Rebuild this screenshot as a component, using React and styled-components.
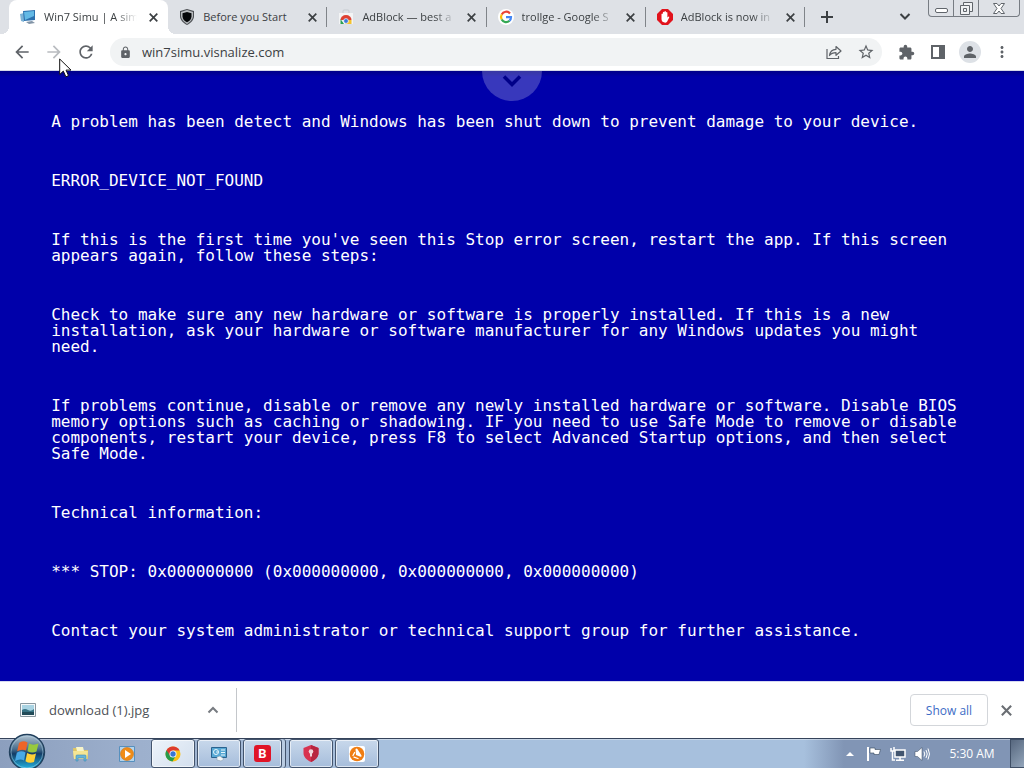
import React from "react";
import styled, { createGlobalStyle } from "styled-components";
import {
  MdArrowBack, MdArrowForward, MdRefresh, MdLock, MdStarBorder,
  MdExtension, MdPerson, MdMoreVert,
} from "react-icons/md";

const Global = createGlobalStyle`
  *, *::before, *::after { box-sizing: border-box; }
  body { margin: 0; font-family: "Open Sans", "Noto Sans", sans-serif; font-size: 12px; color: #3c4043; }
  button { font: inherit; color: inherit; border: 0; background: none; padding: 0; }
  a { color: inherit; text-decoration: none; }
  svg { display: block; flex: none; }
`;

const Desktop = styled.div`
  display: flex;
  flex-direction: column;
  min-height: 100vh;
  background: #fff;
`;

/* ---------- tab strip ---------- */
const TabStrip = styled.header`
  display: flex;
  height: 34px;
  padding-left: 9px;
  background: #dee1e6;
`;
const Tabs = styled.nav`
  display: flex;
  flex: 0 1 796px;
  min-width: 0;
`;
const Tab = styled.div`
  position: relative;
  flex: 1 1 0;
  min-width: 0;
  display: flex;
  align-items: center;
  gap: 8px;
  padding: 0 7px 0 11px;
  border-radius: 8px 8px 0 0;
  background: ${(p) => (p.$active ? "#fff" : "transparent")};
  &::before, &::after {
    content: "";
    display: ${(p) => (p.$active ? "block" : "none")};
    position: absolute;
    bottom: 0;
    width: 8px;
    height: 8px;
  }
  &::before { right: 100%; background: radial-gradient(circle at 0 0, transparent 8px, #fff 8px); }
  &::after { left: 100%; background: radial-gradient(circle at 100% 0, transparent 8px, #fff 8px); }
`;
const Divider = styled.span`
  align-self: center;
  flex: none;
  width: 1px;
  height: 20px;
  margin-left: -1px;
  background: #808489;
`;
const TabLink = styled.a`
  flex: 1;
  min-width: 0;
  overflow: hidden;
  white-space: nowrap;
  font-size: 11px;
  line-height: 20px;
  mask-image: ${(p) => (p.$fade ? "linear-gradient(to right, #000 calc(100% - 22px), transparent)" : "none")};
`;
const IconButton = styled.button`
  display: flex;
  flex: none;
  align-items: center;
  justify-content: center;
  width: ${(p) => p.$size || 32}px;
  height: ${(p) => p.$size || 32}px;
  color: ${(p) => p.$color || "#5f6368"};
`;
const NewTab = styled(IconButton)`
  align-self: center;
  margin-left: 6px;
`;
const WindowButtons = styled.div`
  display: flex;
  flex: none;
  height: 17px;
  margin: 0 4px 0 7px;
  border: 1px solid #777c83;
  border-top: 0;
  border-radius: 0 0 4px 4px;
`;
const WindowButton = styled.button`
  display: flex;
  align-items: ${(p) => (p.$low ? "flex-end" : "center")};
  justify-content: center;
  width: ${(p) => p.$width}px;
  padding-bottom: ${(p) => (p.$low ? 3 : 0)}px;
  border-left: ${(p) => (p.$first ? "0" : "1px solid #777c83")};
`;
const Spacer = styled.div`flex: 1;`;

/* ---------- toolbar ---------- */
const Toolbar = styled.div`
  position: relative;
  display: flex;
  align-items: center;
  height: 37px;
  padding: 0 6px;
  border-bottom: 1px solid #d5d9e8;
`;
const AddressBar = styled.form`
  display: flex;
  flex: 1;
  align-items: center;
  min-width: 0;
  height: 28px;
  margin: 0 8px;
  padding-left: 9px;
  border-radius: 14px;
  background: #f1f3f4;
  color: #5f6368;
`;
const AddressInput = styled.input`
  flex: 1;
  min-width: 0;
  margin-left: 10px;
  padding: 0;
  border: 0;
  outline: 0;
  background: none;
  color: #3c4043;
  font: 13px/20px "Open Sans", "Noto Sans", sans-serif;
`;
const Avatar = styled.span`
  display: flex;
  align-items: center;
  justify-content: center;
  width: 22px;
  height: 22px;
  border-radius: 50%;
  background: #dde1e6;
`;
const Cursor = styled.svg`
  position: absolute;
  left: 59px;
  top: 24px;
  z-index: 2;
`;

/* ---------- blue screen ---------- */
const StopScreen = styled.main`
  position: relative;
  flex: 1;
  display: flex;
  flex-direction: column;
  gap: 43px;
  padding: 43px 5% 40px;
  background: linear-gradient(#000088, #0000aa 6px);
  color: #fff;
  font: 16px/16px "DejaVu Sans Mono", "Liberation Mono", monospace;
`;
const Paragraph = styled.p`margin: 0;`;
const PullTab = styled.button`
  position: absolute;
  top: 0;
  left: 50%;
  margin-left: -30px;
  width: 60px;
  height: 30px;
  padding-top: 4px;
  display: flex;
  align-items: flex-start;
  justify-content: center;
  border-radius: 0 0 30px 30px;
  background: rgba(255, 255, 255, 0.22);
`;

/* ---------- download shelf ---------- */
const Shelf = styled.section`
  display: flex;
  align-items: center;
  height: 57px;
  padding: 0 8px 0 20px;
  border-top: 1px solid #d5d9f0;
`;
const Download = styled.div`
  display: flex;
  align-items: center;
  width: 217px;
  height: 44px;
  border-right: 1px solid #c4c7cb;
`;
const FileLink = styled.a`
  flex: 1;
  margin-left: 13px;
  font-size: 13px;
  line-height: 20px;
  color: #4d5156;
`;
const ShowAll = styled.button`
  width: 78px;
  height: 32px;
  margin-right: 8px;
  border: 1px solid #d3d6da;
  border-radius: 4px;
  color: #3d6cc6;
`;

/* ---------- taskbar ---------- */
const Taskbar = styled.footer`
  display: flex;
  height: 30px;
  border-top: 1px solid #35435a;
  background: linear-gradient(to right, #8c9fbe 0, #9db0cd 140px, #a7c0dd 380px, #a7c0dd calc(100% - 220px), #8195b5 calc(100% - 180px));
  box-shadow: inset 0 1px rgba(255, 255, 255, 0.4);
`;
const Orb = styled.button`
  flex: none;
  width: 38px;
  height: 38px;
  margin: -6px 13px -3px 8px;
  z-index: 1;
`;
const Pins = styled.div`display: flex;`;
const Task = styled.button`
  display: flex;
  align-items: center;
  justify-content: center;
  width: ${(p) => (p.$stacked ? 39 : 44)}px;
  height: 29px;
  margin-right: ${(p) => (p.$stacked ? 7 : 2)}px;
  border: 1px solid ${(p) => (p.$open ? "#43546d" : "transparent")};
  border-radius: 3px;
  background: ${(p) => (p.$active ? "linear-gradient(135deg, #edf3fa, #d3dfee)" : p.$open ? "linear-gradient(#c8d8eb, #a6bddb)" : "none")};
  box-shadow: ${(p) => (p.$open ? "inset 0 0 0 1px rgba(255,255,255,.6)" : "none")}${(p) => (p.$stacked ? ", 3px 0 #b9cbe1, 4px 0 #43546d" : "")};
`;
const Tray = styled.div`
  display: flex;
  align-items: center;
  margin-left: auto;
  color: #fff;
`;
const TrayButton = styled.button`
  display: flex;
  justify-content: center;
  width: 24px;
`;
const Clock = styled.time`
  width: 76px;
  text-align: center;
`;
const ShowDesktop = styled.button`
  width: 14px;
  height: 29px;
  border: 1px solid #3f4f66;
  border-right: 0;
  background: linear-gradient(135deg, #56677e, #93a5ba);
`;

/* ---------- drawings ---------- */
const Favicon = ({ kind }) => {
  if (kind === "win") return (
    <svg width="16" height="16" viewBox="0 0 16 16"><path d="M0 5l4-1v9l-3-1z" fill="#7eb3d6" /><path d="M3 2l12-1v10l-11 1z" fill="#2b70ae" /><path d="M4 3l10-1v5l-9 4z" fill="#63b9e5" /><path d="M6 13l6-1 3 2-6 1z" fill="#8294a6" /></svg>);
  if (kind === "shield") return (
    <svg width="16" height="16" viewBox="0 0 16 16"><path d="M8 0l7 2v5c0 4-3 7-7 9-4-2-7-5-7-9V2z" fill="#4c4f53" /><path d="M8 1l6 2v4c0 3-3 6-6 8-3-2-6-5-6-8V3z" fill="#b7babd" /><path d="M8 3l4.500 1.200v3c0 3-2 4.800-4.500 6-2.500-1.200-4.500-3-4.500-6v-3z" fill="#050608" /></svg>);
  if (kind === "store") return (
    <svg width="16" height="16" viewBox="0 0 16 16"><path d="M5 4V2q0-1 1-1h4q1 0 1 1v2" fill="none" stroke="#c6cbd0" /><path d="M1 4h14v11H1z" fill="#f3f4f5" /><path d="M2.500 11a5.500 5 0 0 1 11 0z" fill="#de4032" /><path d="M2.500 10l3.500 5H2.500z" fill="#2aa052" /><path d="M13.500 11v4H7l3-4z" fill="#f4c22f" /><circle cx="8" cy="12" r="2.400" fill="#3c79d8" stroke="#fff" strokeWidth=".7" /></svg>);
  if (kind === "google") return (
    <svg width="16" height="16" viewBox="0 0 16 16"><circle cx="8" cy="8" r="8" fill="#fff" /><g fill="none" strokeWidth="2.200"><path d="M12 4.500A5 5 0 0 0 3.700 5.500" stroke="#ea4335" /><path d="M3.700 5.500a5 5 0 0 0 0 5" stroke="#fbbc05" /><path d="M3.700 10.500A5 5 0 0 0 11.500 11.800" stroke="#34a853" /><path d="M11.500 11.800A5 5 0 0 0 13 8.200H8" stroke="#4285f4" /></g></svg>);
  return (
    <svg width="16" height="16" viewBox="0 0 16 16"><path d="M5 0h6l5 5v6l-5 5H5l-5-5V5z" fill="#e1131c" /><path d="M4.500 7.500V5q.8-1 1.400 0V3.200q.8-1 1.500 0V2.500q.8-1 1.500 0v.9q.8-1 1.500 0v5l1.200-1q1 0 .6 1l-2 4.200Q9.500 14 7.500 13.500 4.500 13 4.500 10z" fill="#fff" /></svg>);
};
const Cross = ({ size = 9 }) => (
  <svg width={size} height={size} viewBox="0 0 9 9"><path d="M.7.7l7.600 7.600M8.300.7L.7 8.300" stroke="currentColor" strokeWidth="1.700" /></svg>
);
const Plus = () => (
  <svg width="12" height="12" viewBox="0 0 12 12"><path d="M6 0v12M0 6h12" stroke="currentColor" strokeWidth="2" /></svg>
);
const Chevron = ({ up, width = 2, color = "#5f6368" }) => (
  <svg width="12" height="12" viewBox="0 0 12 12"><path d={up ? "M1.500 8.500L6 4l4.500 4.500" : "M1.500 4L6 8.500 10.500 4"} fill="none" stroke={color} strokeWidth={width} /></svg>
);
const ShareIcon = () => (
  <svg width="16" height="16" viewBox="0 0 16 16" fill="none" stroke="#5f6368" strokeWidth="1.200"><path d="M1 5v9.500h11.500V12" /><path d="M3.500 11.500c.5-4 3-6 6.500-6.200V2.500L15 7l-5 4.300V8.600c-3 0-5 .8-6.500 2.900z" strokeLinejoin="round" /></svg>
);
const PanelIcon = () => (
  <svg width="16" height="16" viewBox="0 0 16 16"><path d="M1 1h14v14H1zM3 3v10h6V3z" fill="#5f6368" fillRule="evenodd" /></svg>
);
const Folder = () => (
  <svg width="18" height="18" viewBox="0 0 18 18"><path d="M1 3h6l1 2h8v9H2z" fill="#dfc765" /><path d="M4 2h7l1 4H5z" fill="#f7f4c9" /><path d="M1 6h15l-1 8H2z" fill="#f5e694" /><path d="M4 16v-5q0-1 1-1h8q1 0 1 1v5h-2v-3H6v3z" fill="#67b5d9" stroke="#4189b4" strokeWidth=".6" /></svg>
);
const Player = () => (
  <svg width="18" height="18" viewBox="0 0 18 18"><path d="M1.500 1.500h15v15h-15z" fill="#b5d4ec" stroke="#5690be" /><circle cx="9" cy="9" r="6.500" fill="#f08c16" stroke="#c8701a" strokeWidth=".6" /><path d="M7 5l6 4-6 4z" fill="#fff" /></svg>
);
const Chrome = () => (
  <svg width="16" height="16" viewBox="0 0 16 16"><circle cx="8" cy="8" r="7.500" fill="#fbc116" /><path d="M8 8L1.500 4.200A7.500 7.500 0 0 0 7.500 15.500L11 9.500z" fill="#279b4b" /><path d="M8 4.500h6.600L14.500 4.200A7.500 7.500 0 0 0 1.500 4.200L5 9.500z" fill="#dd3a2d" /><circle cx="8" cy="8" r="3.500" fill="#fff" /><circle cx="8" cy="8" r="2.700" fill="#3776d4" /></svg>
);
const Control = () => (
  <svg width="18" height="18" viewBox="0 0 18 18"><path d="M1.500 2.500h15v10h-15z" fill="#58a8d4" stroke="#2a638f" /><circle cx="6" cy="7" r="2.500" fill="none" stroke="#e7f6fb" /><path d="M6 7h2.500M11 5h4M11 7.500h4M11 10h4" stroke="#e7f6fb" /><path d="M7 12l3-1 4 3-3 2-4-1z" fill="#f2f5f7" stroke="#8399aa" strokeWidth=".5" /></svg>
);
const BadgeB = () => (
  <svg width="17" height="17" viewBox="0 0 17 17"><rect width="17" height="17" rx="3" fill="#e01427" /><text x="8.500" y="13" textAnchor="middle" fontFamily="Roboto, sans-serif" fontSize="13" fontWeight="700" fill="#fff">B</text></svg>
);
const Guard = () => (
  <svg width="16" height="17" viewBox="0 0 16 17"><path d="M8 0l7.500 3v5c0 4-3 7-7.500 9C3.500 15 .5 12 .5 8V3z" fill="#d83350" /><path d="M8 0l7.500 3v5c0 4-3 7-7.500 9z" fill="#b8253f" /><circle cx="8" cy="6.500" r="2.300" fill="#f1d6db" /><path d="M7 7h2v4.500H7z" fill="#f1d6db" /></svg>
);
const Avast = () => (
  <svg width="16" height="16" viewBox="0 0 16 16"><rect width="16" height="16" rx="2" fill="#fff" /><circle cx="8" cy="8" r="7.300" fill="#f07d12" /><path d="M6.500 3q1.300-1.200 2.200.4L12.500 9.500q.4 1.500-1 1.300L7 9z" fill="#fff" /><path d="M5.600 6.500L4 9.500M5 11.200l4 1.300" stroke="#fff" strokeWidth="1.300" strokeLinecap="round" /></svg>
);
const StartOrb = () => (
  <svg width="38" height="38" viewBox="0 0 38 38">
    <defs>
      <linearGradient id="orbBody" x1="0" y1="0" x2="0" y2="1"><stop offset="0" stopColor="#b5c5d2" /><stop offset=".42" stopColor="#476c8c" /><stop offset=".55" stopColor="#123c66" /><stop offset="1" stopColor="#22b8e6" /></linearGradient>
    </defs>
    <circle cx="19" cy="19" r="17.500" fill="url(#orbBody)" stroke="#21405d" strokeWidth="1.400" />
    <circle cx="19" cy="19" r="16" fill="none" stroke="#b2d5e8" strokeOpacity=".5" />
    <path d="M11 10q3.500-3 8.500-.5L18 17.500q-4.500-2-8.800.7z" fill="#ee6528" />
    <path d="M21 10.500q4 2.300 9.500 0L28.500 18.500q-4.500 2.200-9-.3z" fill="#98c93d" />
    <path d="M8.800 19.700q4.200-2.500 8.800-.3L16 27.500q-4-2.300-9 .5z" fill="#48a9e6" />
    <path d="M19 20q4.500 2.500 9 .5L26 29q-4.500 2-8.500-.8z" fill="#fdd037" />
  </svg>
);

const TABS = [
  { title: "Win7 Simu | A sim", kind: "win", active: true, fade: true },
  { title: "Before you Start", kind: "shield" },
  { title: "AdBlock — best a", kind: "store", fade: true },
  { title: "trollge - Google S", kind: "google", fade: true },
  { title: "AdBlock is now in", kind: "adblock", fade: true },
];
const MESSAGES = [
  "A problem has been detect and Windows has been shut down to prevent damage to your device.",
  "ERROR_DEVICE_NOT_FOUND",
  "If this is the first time you've seen this Stop error screen, restart the app. If this screen appears again, follow these steps:",
  "Check to make sure any new hardware or software is properly installed. If this is a new installation, ask your hardware or software manufacturer for any Windows updates you might need.",
  "If problems continue, disable or remove any newly installed hardware or software. Disable BIOS memory options such as caching or shadowing. IF you need to use Safe Mode to remove or disable components, restart your device, press F8 to select Advanced Startup options, and then select Safe Mode.",
  "Technical information:",
  "*** STOP: 0x000000000 (0x000000000, 0x000000000, 0x000000000)",
  "Contact your system administrator or technical support group for further assistance.",
];

export default function App() {
  return (
    <Desktop>
      <Global />
      <TabStrip>
        <Tabs>
          {TABS.map((t) => (
            <React.Fragment key={t.kind}>
              <Tab $active={t.active}>
                <Favicon kind={t.kind} />
                <TabLink href="#" $fade={t.fade}>{t.title}</TabLink>
                <IconButton $size={16} $color="#3c4043" aria-label="Close tab"><Cross /></IconButton>
              </Tab>
              {!t.active && <Divider />}
            </React.Fragment>
          ))}
        </Tabs>
        <NewTab $color="#3c4043" aria-label="New tab"><Plus /></NewTab>
        <Spacer />
        <IconButton $color="#3c4043" aria-label="Search tabs"><Chevron color="#3c4043" /></IconButton>
        <WindowButtons>
          <WindowButton $width={24} $first $low aria-label="Minimize">
            <svg width="13" height="5" viewBox="0 0 13 5"><rect x=".5" y=".5" width="12" height="4" rx="1.500" fill="#fff" stroke="#60656b" /></svg>
          </WindowButton>
          <WindowButton $width={25} aria-label="Restore">
            <svg width="13" height="13" viewBox="0 0 13 13" fill="#eff1f3" stroke="#60656b"><path d="M3.500.5h9v9h-9z" /><path d="M.5 3.500h9v9h-9z" /><path d="M3.500 6.500h3v3h-3z" /></svg>
          </WindowButton>
          <WindowButton $width={41} aria-label="Close">
            <svg width="12" height="11" viewBox="0 0 12 11"><path d="M.5.5h3.500L6 3 8 .5h3.500L8 5.500l3.500 5H8L6 8l-2 2.500H.5L4 5.500z" fill="#fff" stroke="#60656b" /></svg>
          </WindowButton>
        </WindowButtons>
      </TabStrip>

      <Toolbar>
        <IconButton aria-label="Back"><MdArrowBack size={20} /></IconButton>
        <IconButton $color="#b9bcc0" aria-label="Forward"><MdArrowForward size={20} /></IconButton>
        <IconButton aria-label="Reload"><MdRefresh size={20} /></IconButton>
        <AddressBar>
          <MdLock size={13} />
          <AddressInput aria-label="Address" defaultValue="win7simu.visnalize.com" />
          <IconButton type="button" aria-label="Share"><ShareIcon /></IconButton>
          <IconButton type="button" aria-label="Bookmark"><MdStarBorder size={18} /></IconButton>
        </AddressBar>
        <IconButton aria-label="Extensions"><MdExtension size={17} /></IconButton>
        <IconButton aria-label="Side panel"><PanelIcon /></IconButton>
        <IconButton aria-label="Profile"><Avatar><MdPerson size={18} /></Avatar></IconButton>
        <IconButton aria-label="Menu"><MdMoreVert size={18} /></IconButton>
        <Cursor width="13" height="20" viewBox="0 0 13 20"><path d="M.7 1v15.500l3.600-3.400 2.600 5.700 2.600-1.200-2.500-5.500h5z" fill="#fff" stroke="#111" /></Cursor>
      </Toolbar>

      <StopScreen>
        <PullTab aria-label="Open panel">
          <svg width="20" height="13" viewBox="0 0 20 13"><path d="M2 1.500l8 8 8-8" fill="none" stroke="#000088" strokeWidth="3.500" /></svg>
        </PullTab>
        {MESSAGES.map((m) => <Paragraph key={m}>{m}</Paragraph>)}
      </StopScreen>

      <Shelf>
        <Download>
          <svg width="16" height="14" viewBox="0 0 16 14"><path d="M.5.5h15v13H.5z" fill="#f5f8f9" stroke="#8b989f" /><path d="M2 2h12v10H2z" fill="#a9d3e2" /><path d="M2 7q3-2 6 0t6-1v3H2z" fill="#377283" /><path d="M2 9h12v3H2z" fill="#214a57" /></svg>
          <FileLink href="#">download (1).jpg</FileLink>
          <IconButton $size={46} aria-label="Download options"><Chevron up width={2} color="#777b80" /></IconButton>
        </Download>
        <Spacer />
        <ShowAll>Show all</ShowAll>
        <IconButton $size={20} $color="#6a6e73" aria-label="Close shelf"><Cross size={11} /></IconButton>
      </Shelf>

      <Taskbar>
        <Orb aria-label="Start"><StartOrb /></Orb>
        <Pins>
          <Task aria-label="Explorer"><Folder /></Task>
          <Task aria-label="Media Player"><Player /></Task>
          <Task $open $active aria-label="Chrome"><Chrome /></Task>
          <Task $open aria-label="Control Panel"><Control /></Task>
          <Task $open $stacked aria-label="Bitdefender"><BadgeB /></Task>
          <Task $open aria-label="Guard"><Guard /></Task>
          <Task $open aria-label="Avast"><Avast /></Task>
        </Pins>
        <Tray>
          <TrayButton aria-label="Hidden icons"><svg width="8" height="4" viewBox="0 0 8 4"><path d="M0 4l4-4 4 4z" fill="#fff" /></svg></TrayButton>
          <TrayButton aria-label="Action Center"><svg width="16" height="16" viewBox="0 0 16 16"><path d="M2 1v14" stroke="#fff" strokeWidth="2" /><path d="M4 2h5v1.500h5.500L13 8.500H8V7H4z" fill="#fff" stroke="#34465c" strokeWidth=".6" /></svg></TrayButton>
          <TrayButton aria-label="Network"><svg width="16" height="16" viewBox="0 0 16 16" fill="none" stroke="#fff" strokeWidth="1.500"><path d="M5 4h10v7H5z" fill="#42556f" /><path d="M10 11v3M6 14.200h8M1 2v3h3V1M2.500 5v9H5" /></svg></TrayButton>
          <TrayButton aria-label="Volume"><svg width="16" height="16" viewBox="0 0 16 16"><path d="M1 5.500h2.500L8 1.500v13L3.500 10.500H1z" fill="#fff" stroke="#34465c" strokeWidth=".5" /><path d="M10 5.500q1.500 2.500 0 5M12 4q2.500 4 0 8M14 2.500q3 5.500 0 11" fill="none" stroke="#fff" /></svg></TrayButton>
          <Clock>5:30 AM</Clock>
          <ShowDesktop aria-label="Show desktop" />
        </Tray>
      </Taskbar>
    </Desktop>
  );
}
